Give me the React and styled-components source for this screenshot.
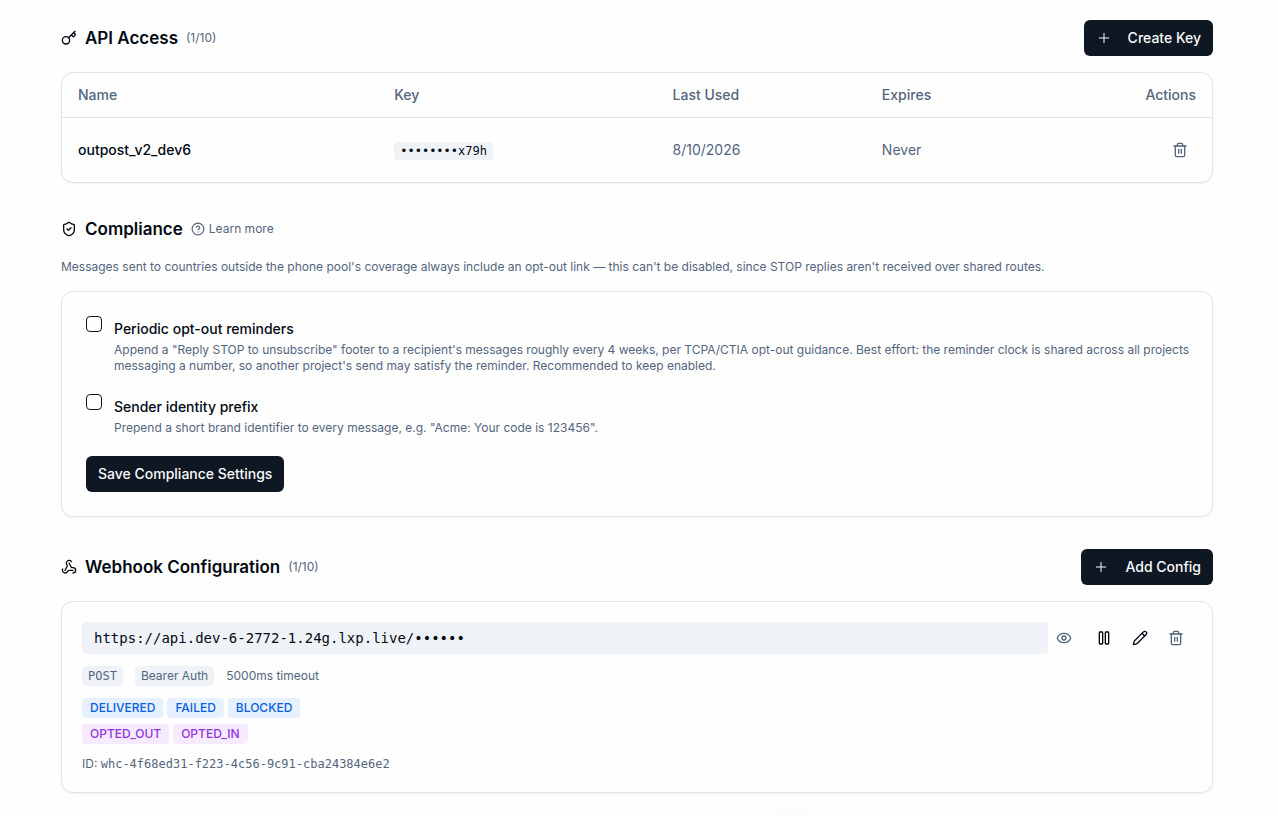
import React from 'react';
import styled, { createGlobalStyle } from 'styled-components';
import {
  CircleHelp,
  Eye,
  Key,
  Pause,
  Pencil,
  Plus,
  ShieldCheck,
  Trash2,
  Webhook,
} from 'lucide-react';

const apiKeys = [
  { name: 'outpost_v2_dev6', key: '••••••••x79h', lastUsed: '8/10/2026', expires: 'Never' },
];

const webhooks = [
  {
    id: 'whc-4f68ed31-f223-4c56-9c91-cba24384e6e2',
    url: 'https://api.dev-6-2772-1.24g.lxp.live/••••••',
    method: 'POST',
    auth: 'Bearer Auth',
    timeout: '5000ms timeout',
    statuses: ['DELIVERED', 'FAILED', 'BLOCKED'],
    consents: ['OPTED_OUT', 'OPTED_IN'],
  },
];

function ApiAccess() {
  return (
    <section>
      <SectionHeader>
        <Heading>
          <Key size={16} />
          <Title>API Access</Title>
          <Muted>(1/10)</Muted>
        </Heading>
        <Button type="button" $icon>
          <Plus size={16} />
          Create Key
        </Button>
      </SectionHeader>
      <Card>
        <Table>
          <thead>
            <tr>
              <Th $width="27.5%">Name</Th>
              <Th $width="24.2%">Key</Th>
              <Th $width="18.2%">Last Used</Th>
              <Th>Expires</Th>
              <Th $right>Actions</Th>
            </tr>
          </thead>
          <tbody>
            {apiKeys.map(item => (
              <tr key={item.name}>
                <Td $strong>{item.name}</Td>
                <Td><KeyCode>{item.key}</KeyCode></Td>
                <Td>{item.lastUsed}</Td>
                <Td>{item.expires}</Td>
                <Td $right>
                  <IconButton type="button" aria-label="Delete key" $muted>
                    <Trash2 size={16} />
                  </IconButton>
                </Td>
              </tr>
            ))}
          </tbody>
        </Table>
      </Card>
    </section>
  );
}

function Compliance() {
  const [settings, setSettings] = React.useState({
    reminders: false,
    prefix: false,
  });

  const handleChanges = e => {
    setSettings({ ...settings, [e.target.name]: e.target.checked });
  };

  return (
    <section>
      <SectionHeader $short>
        <Heading>
          <ShieldCheck size={16} />
          <Title>Compliance</Title>
          <LearnMore href="#compliance">
            <CircleHelp size={14} />
            Learn more
          </LearnMore>
        </Heading>
      </SectionHeader>
      <Intro>
        Messages sent to countries outside the phone pool's coverage always include an opt-out
        link — this can't be disabled, since STOP replies aren't received over shared routes.
      </Intro>
      <Card>
        <Settings>
          <Setting>
            <Checkbox
              id="reminders"
              name="reminders"
              checked={settings.reminders}
              onChange={handleChanges}
            />
            <div>
              <Label htmlFor="reminders">Periodic opt-out reminders</Label>
              <Muted as="p">
                Append a "Reply STOP to unsubscribe" footer to a recipient's messages roughly every
                4 weeks, per TCPA/CTIA opt-out guidance. Best effort: the reminder clock is shared
                across all projects messaging a number, so another project's send may satisfy the
                reminder. Recommended to keep enabled.
              </Muted>
            </div>
          </Setting>
          <Setting>
            <Checkbox
              id="prefix"
              name="prefix"
              checked={settings.prefix}
              onChange={handleChanges}
            />
            <div>
              <Label htmlFor="prefix">Sender identity prefix</Label>
              <Muted as="p">
                Prepend a short brand identifier to every message, e.g. "Acme: Your code is 123456".
              </Muted>
            </div>
          </Setting>
          <Button type="button">Save Compliance Settings</Button>
        </Settings>
      </Card>
    </section>
  );
}

function WebhookConfiguration() {
  return (
    <section>
      <SectionHeader>
        <Heading>
          <Webhook size={16} />
          <Title>Webhook Configuration</Title>
          <Muted>(1/10)</Muted>
        </Heading>
        <Button type="button" $icon>
          <Plus size={16} />
          Add Config
        </Button>
      </SectionHeader>
      {webhooks.map(hook => (
        <Card key={hook.id}>
          <Config>
            <UrlRow>
              <Url>{hook.url}</Url>
              <RevealButton type="button" aria-label="Show URL">
                <Eye size={16} />
              </RevealButton>
              <Actions>
                <IconButton type="button" aria-label="Pause">
                  <Pause size={16} />
                </IconButton>
                <IconButton type="button" aria-label="Edit">
                  <Pencil size={16} />
                </IconButton>
                <IconButton type="button" aria-label="Delete" $muted>
                  <Trash2 size={16} />
                </IconButton>
              </Actions>
            </UrlRow>
            <Meta>
              <Chip $mono>{hook.method}</Chip>
              <Chip>{hook.auth}</Chip>
              <Muted>{hook.timeout}</Muted>
            </Meta>
            <Events>
              <Tags>
                {hook.statuses.map(s => <Tag key={s}>{s}</Tag>)}
              </Tags>
              <Tags>
                {hook.consents.map(s => <Tag key={s} $purple>{s}</Tag>)}
              </Tags>
            </Events>
            <Muted as="p">ID: <Mono>{hook.id}</Mono></Muted>
          </Config>
        </Card>
      ))}
    </section>
  );
}

export default function App() {
  return (
    <>
      <GlobalStyle />
      <Page>
        <Content>
          <ApiAccess />
          <Compliance />
          <WebhookConfiguration />
        </Content>
      </Page>
      <HiddenToast aria-hidden="true" />
    </>
  );
}


//Styled Components
const GlobalStyle = createGlobalStyle`
  *, *::before, *::after {
    box-sizing: border-box;
  }

  body {
    margin: 0;
    background: #fefefe;
    color: #030a14;
    font-family: Inter, sans-serif;
    font-size: 14px;
    line-height: 20px;
  }

  h2, p {
    margin: 0;
  }

  button {
    font: inherit;
    border: 0;
    cursor: pointer;
  }

  svg {
    flex-shrink: 0;
  }
`;

const mono = '"DejaVu Sans Mono", monospace';

const Page = styled.main`
  padding: 20px 4px 20px 0;
`;

const Content = styled.div`
  display: flex;
  flex-direction: column;
  gap: 32px;
  max-width: 1152px;
  margin: 0 auto;
`;

const SectionHeader = styled.header`
  display: flex;
  align-items: center;
  justify-content: space-between;
  min-height: ${p => (p.$short ? '28px' : '36px')};
  margin-bottom: 16px;
`;

const Heading = styled.div`
  display: flex;
  align-items: center;
  gap: 8px;
`;

const Title = styled.h2`
  font-size: 17px;
  line-height: 28px;
  font-weight: 600;
`;

const Muted = styled.span`
  color: #53657d;
  font-size: 12px;
  line-height: 16px;
`;

const Intro = styled(Muted).attrs({ as: 'p' })`
  margin-bottom: 16px;
`;

const LearnMore = styled.a`
  display: flex;
  align-items: center;
  gap: 4px;
  color: #53657d;
  font-size: 12px;
  line-height: 16px;
  text-decoration: none;
`;

const Button = styled.button`
  display: inline-flex;
  align-items: center;
  gap: 16px;
  height: 36px;
  padding: 0 12px;
  border-radius: 6px;
  background: #0f1722;
  color: #f8fafc;
  font-weight: 500;

  svg {
    stroke-width: ${p => (p.$icon ? 1.5 : 2)};
  }
`;

const IconButton = styled.button`
  display: inline-flex;
  align-items: center;
  justify-content: center;
  width: 32px;
  height: 32px;
  padding: 0;
  border-radius: 6px;
  background: transparent;
  color: ${p => (p.$muted ? '#53657d' : '#030a14')};
  vertical-align: top;
`;

const Card = styled.div`
  border: 1px solid #dce5ed;
  border-radius: 12px;
  background: #fefefe;
  box-shadow: 0 1px 2px rgba(0, 0, 0, 0.05);
`;

const Table = styled.table`
  width: 100%;
  table-layout: fixed;
  border-collapse: separate;
  border-spacing: 0;
`;

const Th = styled.th`
  width: ${p => p.$width || 'auto'};
  height: 45px;
  padding: 0 16px;
  border-bottom: 1px solid #dce5ed;
  color: #53657d;
  font-weight: 500;
  text-align: ${p => (p.$right ? 'right' : 'left')};
`;

const Td = styled.td`
  height: 64px;
  padding: 0 16px;
  color: ${p => (p.$strong ? '#030a14' : '#53657d')};
  font-weight: ${p => (p.$strong ? 500 : 400)};
  text-align: ${p => (p.$right ? 'right' : 'left')};
`;

const Mono = styled.span`
  font-family: ${mono};
`;

const KeyCode = styled.code`
  padding: 2px 6px;
  border-radius: 4px;
  background: #eff3f7;
  color: #030a14;
  font-family: ${mono};
  font-size: 12px;
`;

const Settings = styled.div`
  display: flex;
  flex-direction: column;
  align-items: flex-start;
  gap: 20px;
  padding: 24px 16px 24px 24px;
`;

const Setting = styled.div`
  display: flex;
  align-items: flex-start;
  gap: 12px;
`;

const Checkbox = styled.input.attrs({ type: 'checkbox' })`
  appearance: none;
  flex-shrink: 0;
  width: 16px;
  height: 16px;
  margin: 0;
  border: 1px solid #0f1722;
  border-radius: 4px;

  &:checked {
    background: #0f1722;
  }
`;

const Label = styled.label`
  display: block;
  font-weight: 500;
  line-height: 26px;
`;

const Config = styled.div`
  display: flex;
  flex-direction: column;
  gap: 12px;
  padding: 20px;
`;

const UrlRow = styled.div`
  display: flex;
  align-items: center;
`;

const Url = styled.code`
  flex: 1;
  padding: 6px 12px;
  border-radius: 4px;
  background: #eff3f7;
  font-family: ${mono};
  font-size: 14px;
`;

const RevealButton = styled.button`
  display: flex;
  margin: 0 16px 0 8px;
  padding: 0;
  background: transparent;
  color: #53657d;
`;

const Actions = styled.div`
  display: flex;
  gap: 4px;
`;

const Meta = styled.div`
  display: flex;
  align-items: center;
  gap: 12px;
`;

const Chip = styled.span`
  padding: 2px 6px;
  border-radius: 4px;
  background: #eff3f7;
  color: #53657d;
  font-family: ${p => (p.$mono ? mono : 'inherit')};
  font-size: 12px;
  line-height: 16px;
`;

const Events = styled.div`
  display: flex;
  flex-direction: column;
  gap: 6px;
`;

const Tags = styled.div`
  display: flex;
  gap: 4px;
`;

const Tag = styled.span`
  padding: 2px 8px;
  border-radius: 4px;
  background: ${p => (p.$purple ? '#f6ebfe' : '#e6f0fe')};
  color: ${p => (p.$purple ? '#9333e0' : '#0860dc')};
  font-size: 12px;
  line-height: 16px;
  font-weight: 500;
`;

// parked below the window, only its shadow reaches in
const HiddenToast = styled.div`
  position: fixed;
  bottom: -32px;
  left: 59%;
  width: 80px;
  height: 24px;
  border-radius: 12px;
  box-shadow: 0 0 24px rgba(0, 0, 0, 0.05);
  pointer-events: none;
`;
